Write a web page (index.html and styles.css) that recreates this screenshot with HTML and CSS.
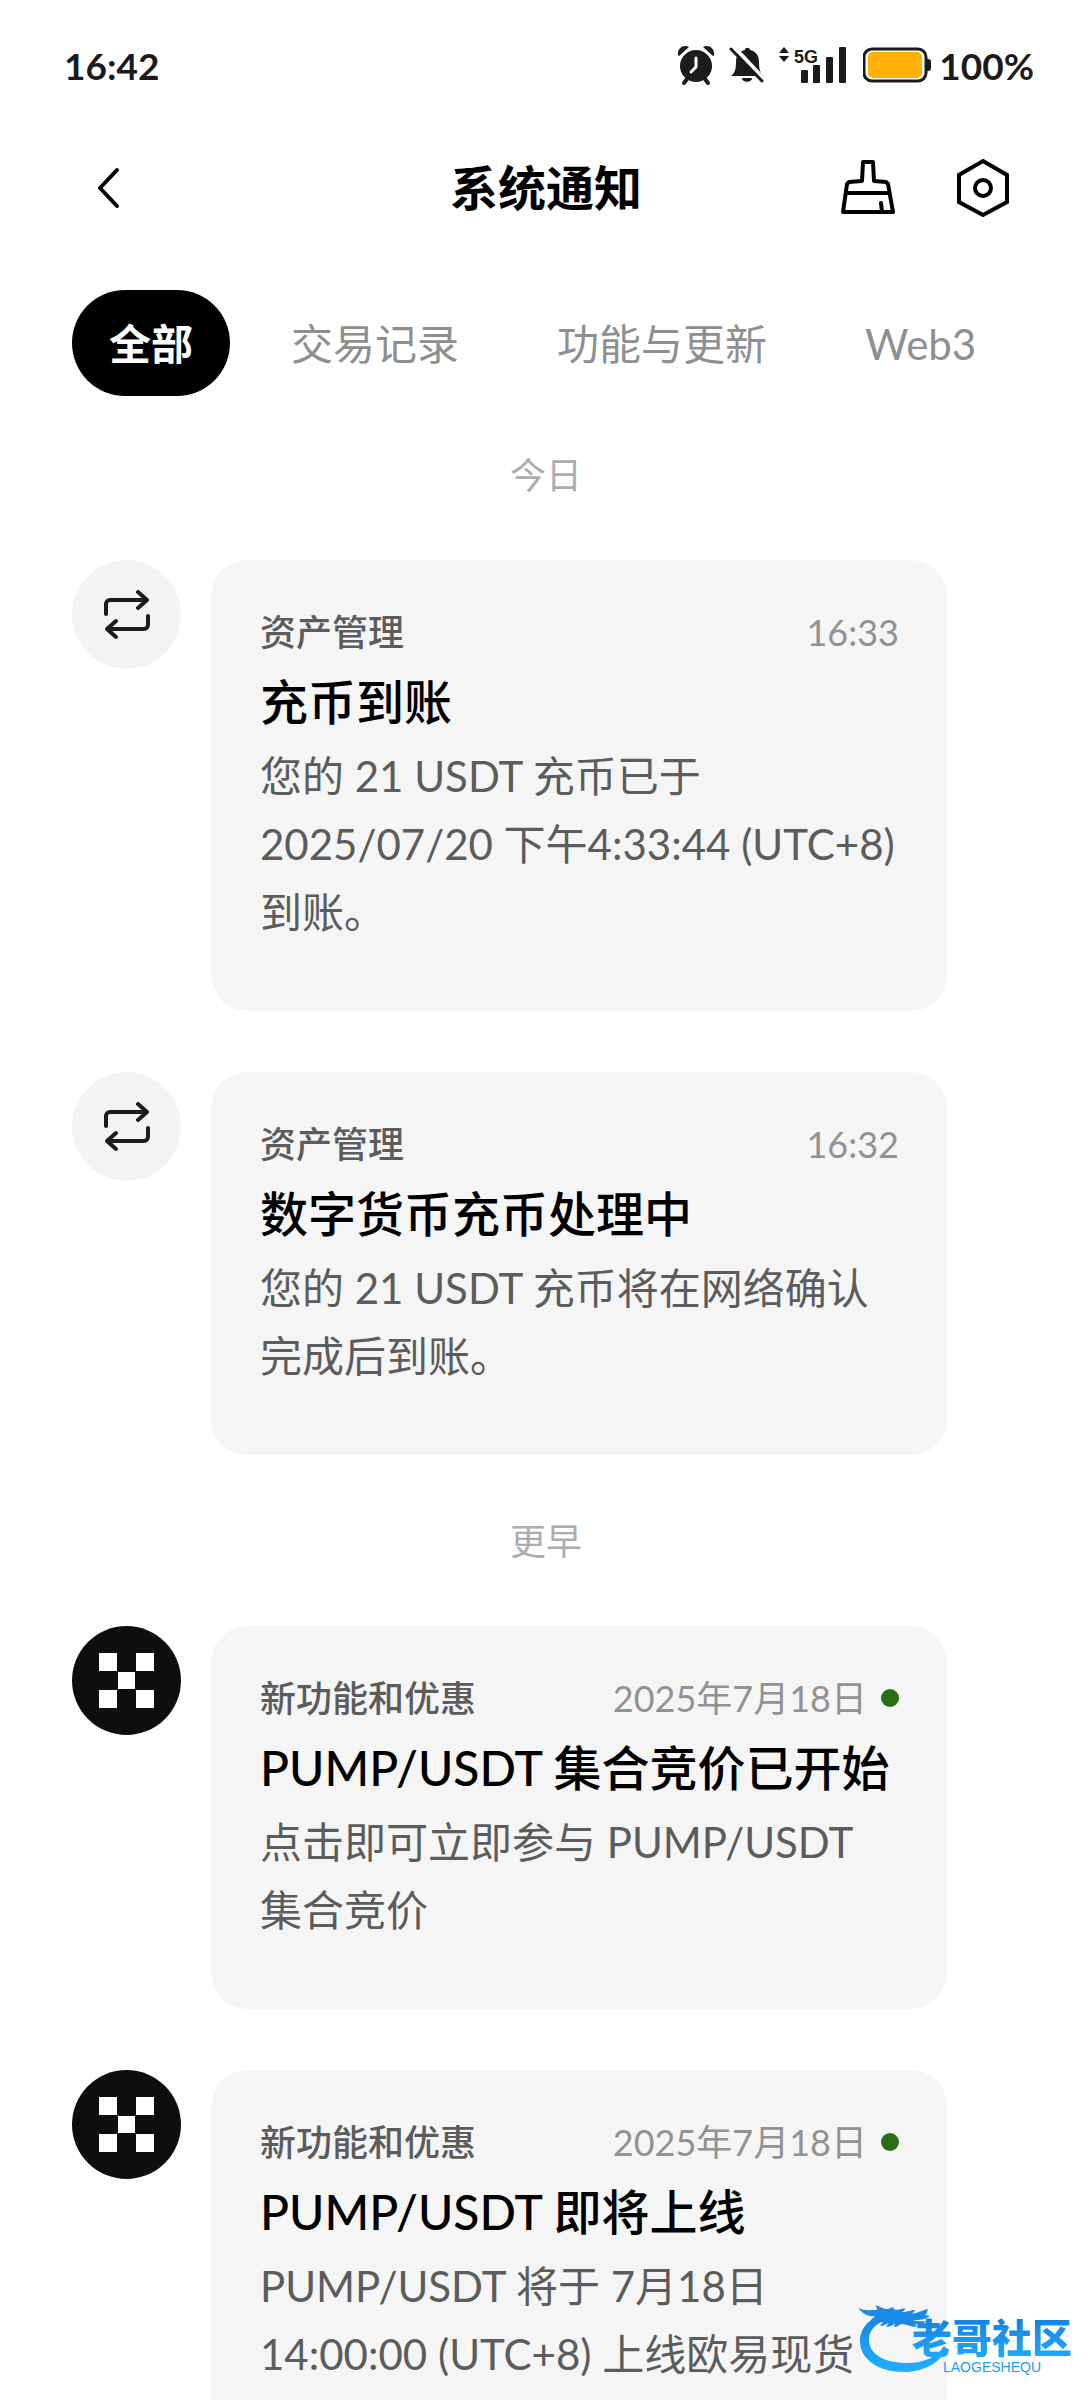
FILE: index.html
```html
<!DOCTYPE html>
<html lang="zh-CN">
<head>
    <meta charset="UTF-8">
    <meta name="viewport" content="width=device-width, initial-scale=1.0">
    <title>系统通知</title>
    <link rel="stylesheet" href="styles.css">
</head>
<body>
    <!-- Shared icons -->
    <svg class="sprite" aria-hidden="true">
        <symbol id="icon-transfer" viewBox="0 0 48 50">
            <path d="M3 24V14a4 4 0 0 1 4-4h36M35 2l9 8-9 8M45 26v9a4 4 0 0 1-4 4H5M13 31l-9 8 9 8" fill="none" stroke="#1b1b1b" stroke-width="4" stroke-linecap="round" stroke-linejoin="round"/>
        </symbol>
        <symbol id="icon-brand" viewBox="0 0 56 56">
            <path d="M0 0h18v18H0zM37 0h18v18H37zM19 19h17v17H19zM0 37h18v18H0zM37 37h18v18H37z" fill="#fff"/>
        </symbol>
    </svg>

    <div class="screen">
        <div class="status-bar">
            <span>16:42</span>
            <div class="status-icons">
                <svg class="alarm" width="38" height="40" viewBox="0 0 38 40">
                    <circle cx="19" cy="21" r="16" fill="#1b1b1b"/>
                    <path d="M1 10C0 4 6-1 12 2L2 11zM37 10c1-6-5-11-11-8l10 9z" fill="#1b1b1b"/>
                    <path d="M10 34l-3 4M28 34l3 4" stroke="#1b1b1b" stroke-width="4" stroke-linecap="round"/>
                    <path d="M19 13v9l-5 5" fill="none" stroke="#fff" stroke-width="3" stroke-linecap="round"/>
                </svg>
                <svg class="bell" width="36" height="38" viewBox="0 0 36 38">
                    <path d="M2 30c4-3 5-7 5-14C7 9 11 5 16 4c0-3 5-3 5 0 6 1 9 6 9 12 0 7 1 11 5 14z" fill="#1b1b1b"/>
                    <path d="M13 32h10c0 5-10 5-10 0z" fill="#1b1b1b"/>
                    <path d="M4 0l34 36" stroke="#fff" stroke-width="4"/>
                    <path d="M2 3l31 32" stroke="#1b1b1b" stroke-width="3" stroke-linecap="round"/>
                </svg>
                <svg class="signal" width="68" height="38" viewBox="0 0 68 38">
                    <path d="M0 7l5-6 5 6zM0 10h10l-5 6z" fill="#1b1b1b"/>
                    <text x="15" y="17">5G</text>
                    <g fill="#1b1b1b">
                        <rect x="22" y="24" width="7" height="13" rx="1"/>
                        <rect x="34" y="19" width="7" height="18" rx="1"/>
                        <rect x="47" y="11" width="7" height="26" rx="1"/>
                        <rect x="60" y="1" width="7" height="36" rx="1"/>
                    </g>
                </svg>
                <svg class="battery" width="68" height="36" viewBox="0 0 68 36">
                    <rect x="1" y="2" width="62" height="32" rx="8" fill="#fff" stroke="#1b1b1b" stroke-width="3"/>
                    <rect x="5" y="5" width="54" height="26" rx="5" fill="#ffb000"/>
                    <path d="M64 12h1a3 3 0 0 1 3 3v6a3 3 0 0 1-3 3h-1z" fill="#1b1b1b"/>
                </svg>
                <span>100%</span>
            </div>
        </div>

        <header class="header">
            <button class="icon-button back" type="button" aria-label="返回">
                <svg width="54" height="60" viewBox="0 0 54 60">
                    <path d="M35 12L18 30l17 18" fill="none" stroke="#000" stroke-width="4" stroke-linecap="round" stroke-linejoin="round"/>
                </svg>
            </button>
            <h1>系统通知</h1>
            <div class="actions">
                <button class="icon-button" type="button" aria-label="清除">
                    <svg width="54" height="60" viewBox="0 0 54 60">
                        <path d="M22 4h10l1 19 12 1 2 2 5 28H2L6 26l2-2 13-1zM6 35h42M40 45l1 9" fill="none" stroke="#000" stroke-width="4" stroke-linecap="round" stroke-linejoin="round"/>
                    </svg>
                </button>
                <button class="icon-button" type="button" aria-label="设置">
                    <svg width="54" height="60" viewBox="0 0 54 60">
                        <path d="M27 3l24 14v27L27 57 3 44V17z" fill="none" stroke="#000" stroke-width="4"/>
                        <circle cx="27" cy="30" r="8" fill="none" stroke="#000" stroke-width="4"/>
                    </svg>
                </button>
            </div>
        </header>

        <nav class="tabs">
            <a class="tab active" href="#all">全部</a>
            <a class="tab" href="#trades">交易记录</a>
            <a class="tab" href="#updates">功能与更新</a>
            <a class="tab" href="#web3">Web3</a>
        </nav>

        <main class="feed">
            <h2 class="day">今日</h2>
            <section class="group">
                <article class="notice">
                    <div class="avatar"><svg width="48" height="50"><use href="#icon-transfer"/></svg></div>
                    <div class="card">
                        <div class="meta">
                            <span class="category">资产管理</span>
                            <time>16:33</time>
                        </div>
                        <h3>充币到账</h3>
                        <p>您的 21 USDT 充币已于<br>2025/07/20 下午4:33:44 (UTC+8) 到账。</p>
                    </div>
                </article>
                <article class="notice">
                    <div class="avatar"><svg width="48" height="50"><use href="#icon-transfer"/></svg></div>
                    <div class="card">
                        <div class="meta">
                            <span class="category">资产管理</span>
                            <time>16:32</time>
                        </div>
                        <h3>数字货币充币处理中</h3>
                        <p>您的 21 USDT 充币将在网络确认完成后到账。</p>
                    </div>
                </article>
            </section>

            <h2 class="day">更早</h2>
            <section class="group">
                <article class="notice">
                    <div class="avatar brand"><svg width="56" height="56"><use href="#icon-brand"/></svg></div>
                    <div class="card">
                        <div class="meta">
                            <span class="category">新功能和优惠</span>
                            <time>2025年7月18日</time>
                            <span class="unread"></span>
                        </div>
                        <h3>PUMP/USDT 集合竞价已开始</h3>
                        <p>点击即可立即参与 PUMP/USDT<br>集合竞价</p>
                    </div>
                </article>
                <article class="notice">
                    <div class="avatar brand"><svg width="56" height="56"><use href="#icon-brand"/></svg></div>
                    <div class="card">
                        <div class="meta">
                            <span class="category">新功能和优惠</span>
                            <time>2025年7月18日</time>
                            <span class="unread"></span>
                        </div>
                        <h3>PUMP/USDT 即将上线</h3>
                        <p>PUMP/USDT 将于 7月18日<br>14:00:00 (UTC+8) 上线欧易现货</p>
                    </div>
                </article>
            </section>
        </main>

        <div class="watermark">
            <svg width="92" height="70" viewBox="0 0 92 70">
                <defs>
                    <linearGradient id="dragon" x1="0" y1="0" x2="0" y2="1">
                        <stop offset="0" stop-color="#1583e2"/>
                        <stop offset="1" stop-color="#20b0ff"/>
                    </linearGradient>
                </defs>
                <path d="M36 8C15 10 2 22 2 37c0 18 18 31 44 31 20 0 38-10 42-24l-2-2C79 53 66 59 49 59 26 59 11 50 11 36c0-12 10-20 27-22z" fill="url(#dragon)"/>
                <path d="M0 4c6 3 12 2 19 2l-1-5c5 2 7 4 12 4l5-2c0 2 2 3 4 3l8-2c0 2-1 3-3 4 6 0 9-2 13-2-1 2-2 3-4 4 7-1 12-4 17-5-1 3-1 5-3 6l5 1c-5 4-11 4-17 4 4 2 9 1 13 1-3 3-7 4-11 3l2 3c-7 0-10-3-16-3-3 2-4 3-7 3l1-3c-4 2-6 3-9 3l3-4c-4 2-6 3-9 3l3-4-8 1 4-4-8 1 4-4C11 13 5 10 0 4z" fill="#1a8ae6"/>
            </svg>
            <div class="watermark-text">
                <strong>老哥社区</strong>
                <small>LAOGESHEQU</small>
            </div>
        </div>
    </div>
</body>
</html>
```

FILE: styles.css
```css
* {
    box-sizing: border-box;
}
body {
    margin: 0;
    background-color: #fff;
    color: #000;
    font-family: Lato, "Noto Sans CJK SC", sans-serif;
}
h1, h2, h3, p {
    margin: 0;
}
svg {
    display: block;
}
.sprite {
    position: absolute;
    width: 0;
    height: 0;
}
.screen {
    position: relative;
    height: 100vh;
    overflow: hidden;
}

/* Status bar */
.status-bar {
    display: flex;
    justify-content: space-between;
    align-items: center;
    height: 130px;
    padding: 0 58px 0 64px;
    font-size: 37px;
    font-weight: bold;
    color: #1b1b1b;
}
.status-icons {
    display: flex;
    align-items: center;
}
.bell {
    margin-left: 14px;
}
.signal {
    margin-left: 14px;
}
.signal text {
    font-family: "Liberation Sans", sans-serif;
    font-size: 18px;
    font-weight: bold;
    fill: #1b1b1b;
}
.battery {
    margin: 0 8px 0 16px;
}

/* Header */
.header {
    display: grid;
    grid-template-columns: 1fr auto 1fr;
    align-items: center;
    height: 116px;
    padding: 0 82px;
}
.header h1 {
    font-size: 48px;
    line-height: 72px;
}
.icon-button {
    padding: 0;
    border: none;
    background: none;
    cursor: pointer;
}
.back {
    justify-self: start;
}
.actions {
    display: flex;
    justify-content: flex-end;
    gap: 61px;
}

/* Tabs */
.tabs {
    display: flex;
    gap: 24px;
    padding: 44px 72px 0;
}
.tab {
    padding: 2px 37px 0;
    border-radius: 53px;
    font-size: 42px;
    line-height: 104px;
    white-space: nowrap;
    color: #8f8f8f;
    text-decoration: none;
}
.tab.active {
    background-color: #000;
    color: #fff;
    font-weight: bold;
}

/* Notification list */
.day {
    padding: 52px 0 58px;
    font-size: 36px;
    font-weight: normal;
    line-height: 54px;
    text-align: center;
    color: #adadad;
}
.group {
    display: flex;
    flex-direction: column;
    gap: 61px;
    padding: 0 145px 7px 72px;
}
.notice {
    display: flex;
    align-items: flex-start;
    gap: 30px;
}
.avatar {
    display: flex;
    flex-shrink: 0;
    justify-content: center;
    align-items: center;
    width: 109px;
    height: 109px;
    border-radius: 50%;
    background-color: #f3f3f3;
}
.avatar.brand {
    background-color: #0e0e0e;
}
.card {
    flex: 1;
    min-width: 0;
    padding: 46px 48px 65px 49px;
    border-radius: 36px;
    background-color: #f5f5f5;
}
.meta {
    display: flex;
    align-items: center;
    font-size: 36px;
    line-height: 52px;
    color: #929292;
}
.category {
    margin-right: auto;
    font-weight: 500;
    color: #5c5c5c;
}
.unread {
    width: 18px;
    height: 18px;
    margin-left: 14px;
    border-radius: 50%;
    background-color: #2b6e16;
}
.card h3 {
    padding-top: 4px;
    font-size: 48px;
    font-weight: 500;
    line-height: 80px;
    white-space: nowrap;
}
.card p {
    font-size: 42px;
    line-height: 68px;
    color: #5c5c5c;
}

/* Community logo over the list */
.watermark {
    position: absolute;
    right: 20px;
    bottom: 26px;
    display: flex;
    align-items: flex-end;
}
.watermark-text {
    display: flex;
    flex-direction: column;
    align-items: center;
    margin-left: -38px;
    color: #1e9bf5;
}
.watermark strong {
    font-size: 40px;
    font-weight: 900;
    line-height: 44px;
    color: transparent;
    background: linear-gradient(#1580e0, #20aaff);
    background-clip: text;
    -webkit-background-clip: text;
}
.watermark small {
    font-family: "Liberation Sans", sans-serif;
    font-size: 14px;
    line-height: 14px;
}
```
